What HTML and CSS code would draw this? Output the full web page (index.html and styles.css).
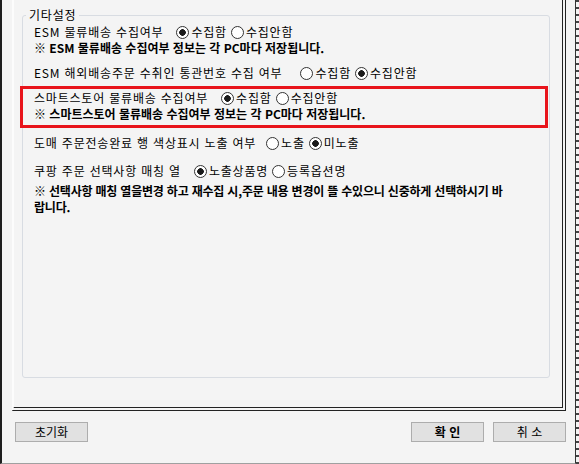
FILE: index.html
```html
<!DOCTYPE html>
<html lang="ko">

<head>
    <meta charset="UTF-8">
    <title>기타설정</title>
    <link rel="stylesheet" href="styles.css">
</head>

<body>
    <div class="frame">
        <div class="window">
            <div class="panel">
                <fieldset class="group">
                    <legend>기타설정</legend>

                    <div class="row">
                        <span class="label">ESM 물류배송 수집여부</span>
                        <span class="opt"><i class="radio on"></i>수집함</span>
                        <span class="opt"><i class="radio"></i>수집안함</span>
                    </div>
                    <p class="note">※ ESM 물류배송 수집여부 정보는 각 PC마다 저장됩니다.</p>

                    <div class="row row-gap">
                        <span class="label label-wide">ESM 해외배송주문 수취인 통관번호 수집 여부</span>
                        <span class="opt"><i class="radio"></i>수집함</span>
                        <span class="opt"><i class="radio on"></i>수집안함</span>
                    </div>

                    <!-- 강조 박스 -->
                    <div class="mark">
                        <div class="row">
                            <span class="label">스마트스토어 물류배송 수집여부</span>
                            <span class="opt"><i class="radio on"></i>수집함</span>
                            <span class="opt"><i class="radio"></i>수집안함</span>
                        </div>
                        <p class="note">※ 스마트스토어 물류배송 수집여부 정보는 각 PC마다 저장됩니다.</p>
                    </div>

                    <div class="row row-doma">
                        <span class="label label-tight">도매 주문전송완료 행 색상표시 노출 여부</span>
                        <span class="opt"><i class="radio"></i>노출</span>
                        <span class="opt"><i class="radio on"></i>미노출</span>
                    </div>

                    <div class="row row-coupang">
                        <span class="label">쿠팡 주문 선택사항 매칭 열</span>
                        <span class="opt"><i class="radio on"></i>노출상품명</span>
                        <span class="opt"><i class="radio"></i>등록옵션명</span>
                    </div>
                    <p class="note note-long">※ 선택사항 매칭 열을변경 하고 재수집 시,주문 내용 변경이 뜰 수있으니 신중하게 선택하시기 바<br>랍니다.</p>
                </fieldset>
            </div>

            <div class="footer">
                <button class="btn">초기화</button>
                <span class="spacer"></span>
                <button class="btn btn-ok">확 인</button>
                <button class="btn">취 소</button>
            </div>
        </div>
        <div class="edge"></div>
    </div>
</body>

</html>
```

FILE: styles.css
```css
/* 초기화 */
* {
    box-sizing: border-box;
}

html,
body {
    margin: 0;
    padding: 0;
    background: #f4f4f4;
}

body {
    font-family: "Noto Sans CJK KR", "Liberation Sans", sans-serif;
    font-size: 12px;
    line-height: 16px;
    color: #000;
}

/* 창 틀 */
.frame {
    display: flex;
    width: 579px;
    height: 464px;
}

.window {
    width: 576px;
    height: 464px;
    padding: 0 9px 0 10px;
    border-left: 2px solid #1e1e1e;
    border-right: 1px solid #333;
    border-bottom: 1px solid #a0a0a0;
}

.edge {
    width: 3px;
    height: 464px;
    background: repeating-linear-gradient(#444 0 2px, #f4f4f4 2px 7px);
}

/* 탭 패널 */
.panel {
    height: 411px;
    padding: 7px 12px 0 8px;
    border-left: 2px solid #fcfcfc;
    border-right: 4px double #222;
    border-bottom: 4px double #222;
}

/* 그룹 박스 */
.group {
    height: 371px;
    margin: 0;
    padding: 1px 11px 0 11px;
    border: 1px solid #d8dce2;
    border-radius: 3px;
}

.group legend {
    margin-left: -8px;
    padding: 0 3px;
    line-height: 16px;
    letter-spacing: 0.8px;
}

.row {
    display: flex;
    align-items: center;
    height: 16px;
    white-space: nowrap;
    letter-spacing: 0.8px;
}

.label {
    margin-right: 13px;
}

.label-wide {
    margin-right: 18px;
}

.label-tight {
    margin-right: 10px;
}

.opt {
    display: flex;
    align-items: center;
    margin-right: 4px;
}

/* 라디오 버튼 */
.radio {
    display: inline-block;
    width: 13px;
    height: 13px;
    margin-right: 2px;
    border: 1px solid #333;
    border-radius: 50%;
    background: #fff;
}

.radio.on {
    background: radial-gradient(circle, #1a1a1a 0 3px, #fff 3.6px);
}

.note {
    margin: 0;
    font-weight: bold;
    white-space: nowrap;
}

.row-gap {
    margin-top: 9px;
}

/* 빨간 강조 박스 */
.mark {
    margin: 5px -10px 0 -14px;
    padding: 1px 11px 3px 11px;
    border: 3px solid #e8141b;
}

.row-doma {
    margin-top: 7px;
}

.row-coupang {
    margin-top: 12px;
}

.note-long {
    margin-top: 4px;
    letter-spacing: -0.2px;
}

/* 하단 버튼 */
.footer {
    display: flex;
    margin-top: 11px;
    padding-left: 3px;
}

.spacer {
    flex: 1;
}

.btn {
    width: 73px;
    height: 20px;
    margin-left: 9px;
    padding: 0;
    border: 1px solid #adadad;
    background: #e1e1e1;
    font-family: inherit;
    font-size: 12px;
    line-height: 16px;
    color: #000;
}

.btn:first-child {
    margin-left: 0;
}

.btn-ok {
    font-weight: bold;
}
```
